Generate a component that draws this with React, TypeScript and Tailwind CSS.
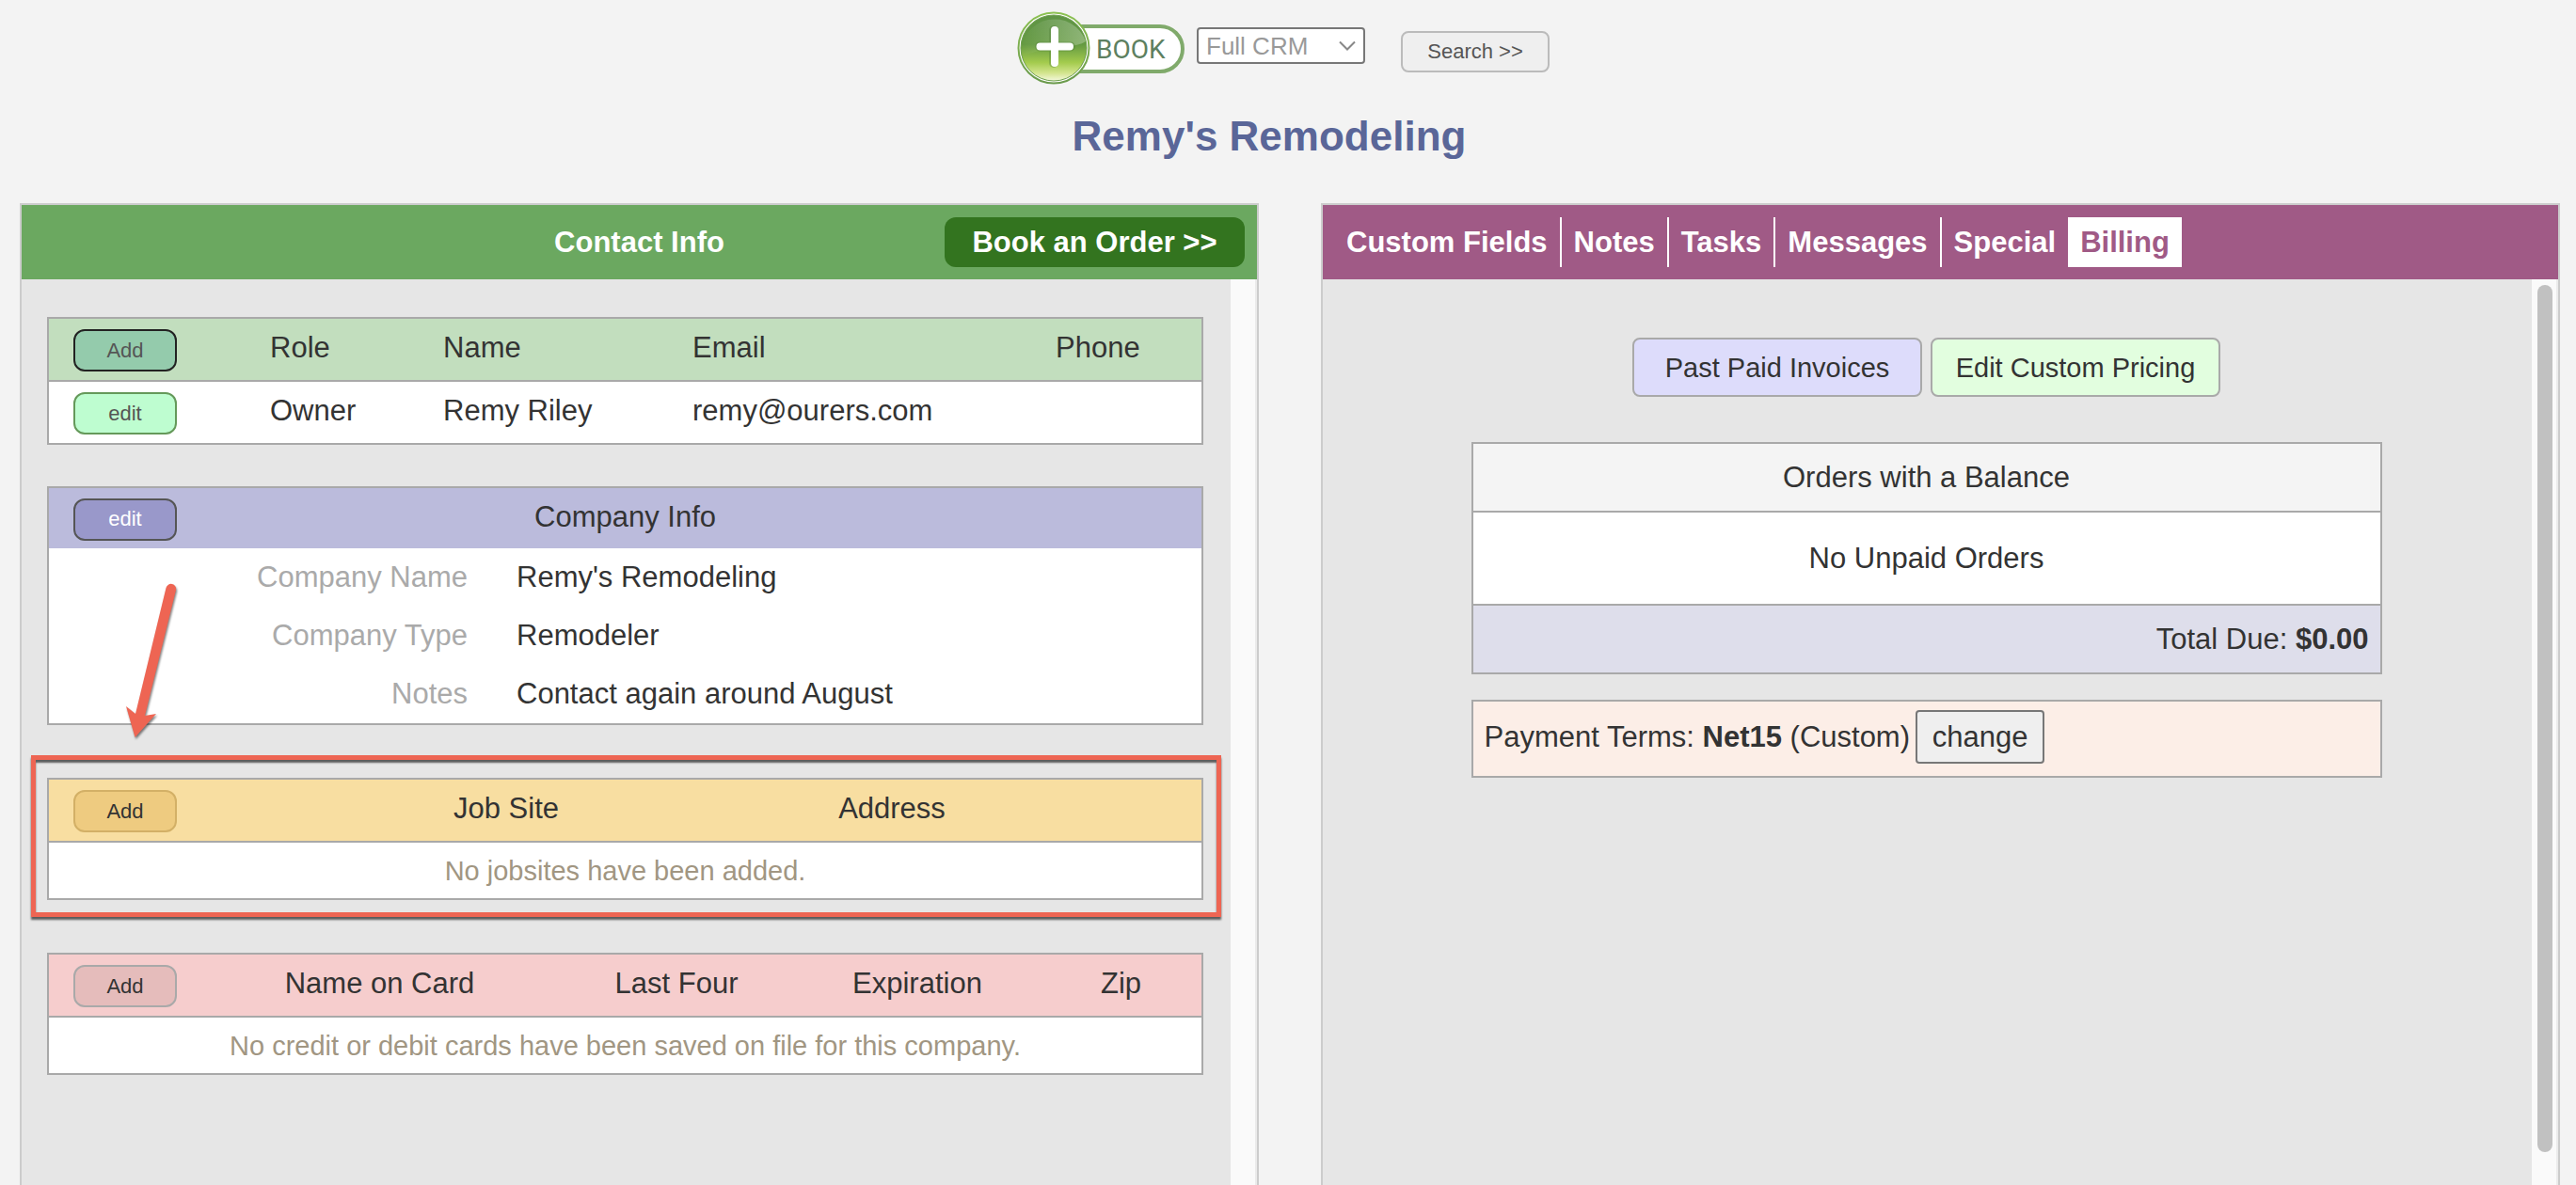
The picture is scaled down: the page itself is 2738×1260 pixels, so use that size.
import { useState } from "react";
import type { ReactNode } from "react";
import clsx from "clsx";

const TABS = ["Custom Fields", "Notes", "Tasks", "Messages", "Special", "Billing"];

const COMPANY_ROWS = [
  { label: "Company Name", value: "Remy's Remodeling" },
  { label: "Company Type", value: "Remodeler" },
  { label: "Notes", value: "Contact again around August" },
];

function BookLogo() {
  return (
    <svg width="178" height="78" viewBox="0 0 178 78" aria-hidden="true">
      <defs>
        <linearGradient id="orb" x1="0" y1="0" x2="0" y2="1">
          <stop offset="0" stopColor="#5f9446" />
          <stop offset="0.45" stopColor="#659a42" />
          <stop offset="0.72" stopColor="#a3cb4d" />
          <stop offset="0.88" stopColor="#d3e58e" />
          <stop offset="1" stopColor="#f4f8dc" />
        </linearGradient>
        <linearGradient id="gloss" x1="0" y1="0" x2="1" y2="0">
          <stop offset="0" stopColor="#ffffff" stopOpacity="0" />
          <stop offset="1" stopColor="#ffffff" stopOpacity="0.28" />
        </linearGradient>
        <linearGradient id="ring" x1="0" y1="0" x2="0" y2="1">
          <stop offset="0" stopColor="#8cc152" />
          <stop offset="1" stopColor="#6a9a4c" />
        </linearGradient>
      </defs>
      <path d="M60 16 H152 A24 24 0 0 1 152 64 H60 Z" fill="#fff" stroke="#80aa6b" strokeWidth="4" />
      <circle cx="39" cy="39" r="37.500" fill="#fff" stroke="url(#ring)" strokeWidth="2" />
      <circle cx="39" cy="39" r="35" fill="url(#orb)" stroke="#6d9f4d" strokeWidth="1" />
      <path d="M5 46 A35 35 0 0 1 73 32 C62 39 50 36 38 38 C25 40 15 46 5 46 Z" fill="url(#gloss)" />
      <path d="M39 20 V55 M24 37.500 H57" stroke="#4d7d35" strokeWidth="10" strokeLinecap="round" opacity="0.35" />
      <path d="M40 20 V55 M24.500 37.500 H56" stroke="#fff" strokeWidth="8" strokeLinecap="round" />
      <text x="84" y="50" fontFamily="Roboto, sans-serif" fontSize="28" fontWeight="400" fill="#5d8060">
        BOOK
      </text>
    </svg>
  );
}

function RowButton({ className, children }: { className: string; children: ReactNode }) {
  return (
    <button
      type="button"
      className={clsx("block h-[45px] w-[110px] rounded-xl border-2 text-[22px] leading-none", className)}
    >
      {children}
    </button>
  );
}

function Card({ children }: { children: ReactNode }) {
  return <div className="border-2 border-[#a9a9a9] bg-white">{children}</div>;
}

function Cols({ widths }: { widths: string[] }) {
  return (
    <colgroup>
      {widths.map((width, i) => (
        <col key={i} className={width} />
      ))}
    </colgroup>
  );
}

function ScrollTrack({ children }: { children?: ReactNode }) {
  return (
    <div className="w-7 shrink-0 border-r-2 border-[#ebebeb] bg-[#fafafa] pl-1.5 pt-1.5">{children}</div>
  );
}

const tableClass = "w-full table-fixed border-separate border-spacing-0";
const headCell = "h-[67px] border-b-2 border-[#a9a9a9] p-0 pb-1 font-normal";
const buttonHead = "h-[67px] border-b-2 border-[#a9a9a9] p-0 pl-[26px] pt-0.5";

function ContactsTable() {
  return (
    <Card>
      <table className={clsx(tableClass, "text-left")}>
        <Cols widths={["w-[235px]", "w-[184px]", "w-[265px]", "w-[386px]", "w-[155px]"]} />
        <thead className="bg-[#c2debe]">
          <tr>
            <th className={buttonHead}>
              <RowButton className="border-[#222] bg-[#94cbac] font-normal text-[#555]">Add</RowButton>
            </th>
            <th className={headCell}>Role</th>
            <th className={headCell}>Name</th>
            <th className={headCell}>Email</th>
            <th className={headCell}>Phone</th>
          </tr>
        </thead>
        <tbody>
          <tr>
            <td className="h-[65px] p-0 pl-[26px] pt-0.5">
              <RowButton className="border-[#65995a] bg-[#befdd0] text-[#555]">edit</RowButton>
            </td>
            <td className="p-0 pb-1">Owner</td>
            <td className="p-0 pb-1">Remy Riley</td>
            <td className="p-0 pb-1">remy@ourers.com</td>
            <td className="p-0 pb-1"></td>
          </tr>
        </tbody>
      </table>
    </Card>
  );
}

function CompanyCard() {
  return (
    <Card>
      <div className="grid h-16 grid-cols-[1fr_auto_1fr] items-center bg-[#bbbbdc] px-[26px] pt-0.5">
        <RowButton className="border-[#555] bg-[#9998ca] text-white">edit</RowButton>
        <h2 className="pb-1">Company Info</h2>
      </div>
      <table className={tableClass}>
        <Cols widths={["w-[445px]", "w-[780px]"]} />
        <tbody>
          {COMPANY_ROWS.map((row) => (
            <tr key={row.label}>
              <th scope="row" className="h-[62px] p-0 text-right font-normal text-[#aaa]">
                {row.label}
              </th>
              <td className="p-0 pl-[52px]">{row.value}</td>
            </tr>
          ))}
        </tbody>
      </table>
    </Card>
  );
}

function JobSitesTable() {
  return (
    <Card>
      <table className={clsx(tableClass, "text-center")}>
        <Cols widths={["w-[405px]", "w-[162px]", "w-[658px]"]} />
        <thead className="bg-[#f8dea1]">
          <tr>
            <th className={buttonHead}>
              <RowButton className="border-[#d3b066] bg-[#eecb80] font-normal">Add</RowButton>
            </th>
            <th className={headCell}>Job Site</th>
            <th className={headCell}>Address</th>
          </tr>
        </thead>
        <tbody>
          <tr>
            <td colSpan={3} className="h-[59px] p-0 text-[29px] text-[#a19682]">
              No jobsites have been added.
            </td>
          </tr>
        </tbody>
      </table>
    </Card>
  );
}

function CardsTable() {
  return (
    <Card>
      <table className={clsx(tableClass, "text-center")}>
        <Cols widths={["w-[161px]", "w-[381px]", "w-[250px]", "w-[262px]", "w-[171px]"]} />
        <thead className="bg-[#f6cdcd]">
          <tr>
            <th className={buttonHead}>
              <RowButton className="border-[#a9a9a9] bg-[#e5bcbb] font-normal">Add</RowButton>
            </th>
            <th className={headCell}>Name on Card</th>
            <th className={headCell}>Last Four</th>
            <th className={headCell}>Expiration</th>
            <th className={headCell}>Zip</th>
          </tr>
        </thead>
        <tbody>
          <tr>
            <td colSpan={5} className="h-[59px] p-0 text-[29px] text-[#a19682]">
              No credit or debit cards have been saved on file for this company.
            </td>
          </tr>
        </tbody>
      </table>
    </Card>
  );
}

// Red box and arrow that point the reader at the job site table
function Callout() {
  return (
    <>
      <div className="pointer-events-none absolute -bottom-[18px] -left-[17px] -right-[19px] -top-6 border-[5px] border-[#ee6553] shadow-[0_3px_2px_rgba(0,0,0,0.6),inset_0_3px_2px_rgba(0,0,0,0.6)]" />
      <svg
        className="pointer-events-none absolute -top-[210px] left-20 drop-shadow-[1px_2px_1px_rgba(0,0,0,0.5)]"
        width="60"
        height="172"
        viewBox="0 0 60 172"
        aria-hidden="true"
      >
        <path
          d="M46.500 8 A5.300 5.300 0 0 1 57 10.500 L24 144 L36 142 L13.500 167 L4 134 L14 142 Z"
          fill="#ee6553"
        />
      </svg>
    </>
  );
}

function ContactPanel() {
  return (
    <section className="flex flex-1 flex-col border-2 border-b-0 border-[#ccc]">
      <div className="grid h-[79px] grid-cols-[1fr_auto_1fr] items-center bg-[#6ba860] px-[13px] font-bold text-white">
        <h2 className="col-start-2">Contact Info</h2>
        <button type="button" className="h-[53px] w-[319px] justify-self-end rounded-xl bg-[#33741f]">
          Book an Order &gt;&gt;
        </button>
      </div>
      <div className="flex flex-1">
        <div className="flex-1 pb-10 pl-[27px] pr-[29px] pt-10">
          <ContactsTable />
          <div className="mt-11">
            <CompanyCard />
          </div>
          <div className="relative mt-14">
            <JobSitesTable />
            <Callout />
          </div>
          <div className="mt-14">
            <CardsTable />
          </div>
        </div>
        <ScrollTrack />
      </div>
    </section>
  );
}

function BillingPanel() {
  const [activeTab, setActiveTab] = useState("Billing");

  return (
    <section className="flex flex-1 flex-col border-2 border-b-0 border-[#ccc]">
      <nav className="flex h-[79px] items-center bg-[#a05a86] pl-3 font-bold">
        {TABS.map((tab, i) => (
          <button
            key={tab}
            type="button"
            onClick={() => setActiveTab(tab)}
            className={clsx(
              "h-[53px] px-[13px]",
              tab === activeTab ? "bg-white text-[#a05a86]" : "text-white",
              i < TABS.length - 1 && TABS[i + 1] !== activeTab && "border-r-2 border-white"
            )}
          >
            {tab}
          </button>
        ))}
      </nav>
      <div className="flex flex-1">
        <div className="flex-1 pr-0.5 pt-[62px]">
          <div className="flex justify-center gap-[9px] text-[29px]">
            <button type="button" className="h-[63px] w-[308px] rounded-lg border-2 border-[#a9a9a9] bg-[#dddcfb]">
              Past Paid Invoices
            </button>
            <button type="button" className="h-[63px] w-[308px] rounded-lg border-2 border-[#a9a9a9] bg-[#e2fedf]">
              Edit Custom Pricing
            </button>
          </div>
          <div className="mx-auto mt-12 w-full max-w-[968px]">
            <Card>
              <table className={clsx(tableClass, "text-center")}>
                <thead className="bg-[#f4f4f4]">
                  <tr>
                    <th className="h-[73px] border-b-2 border-[#a9a9a9] p-0 font-normal">Orders with a Balance</th>
                  </tr>
                </thead>
                <tbody>
                  <tr>
                    <td className="h-[99px] border-b-2 border-[#a9a9a9] p-0">No Unpaid Orders</td>
                  </tr>
                </tbody>
                <tfoot className="bg-[#dedeeb]">
                  <tr>
                    <td className="h-[71px] p-0 pr-3 text-right">
                      Total Due: <b>$0.00</b>
                    </td>
                  </tr>
                </tfoot>
              </table>
            </Card>
            <div className="mt-[27px] flex h-[83px] items-baseline gap-1.5 border-2 border-[#a9a9a9] bg-[#fceee7] px-3 pt-[9px]">
              <p>
                Payment Terms: <b>Net15</b> (Custom)
              </p>
              <button type="button" className="h-[57px] w-[137px] rounded border-2 border-[#777] bg-[#efefef]">
                change
              </button>
            </div>
          </div>
        </div>
        <ScrollTrack>
          <div className="h-[922px] w-4 rounded-full bg-[#c1c1c1]" />
        </ScrollTrack>
      </div>
    </section>
  );
}

export default function App() {
  return (
    <div className="flex min-h-screen flex-col bg-[#f3f3f3] font-['Liberation_Sans',Arial,sans-serif] text-[31px] leading-9 text-[#333]">
      <header className="pt-3">
        <form className="flex items-start justify-center pr-2.5" onSubmit={(e) => e.preventDefault()}>
          <button type="button" aria-label="Book">
            <BookLogo />
          </button>
          <div className="relative ml-[13px] mt-[17px]">
            <select
              aria-label="Search scope"
              className="block h-[39px] w-[179px] appearance-none rounded border-2 border-[#777] bg-white pl-2 text-[26px] leading-none text-[#999]"
            >
              <option>Full CRM</option>
            </select>
            <svg
              className="pointer-events-none absolute right-2.5 top-3.5"
              width="18"
              height="12"
              viewBox="0 0 18 12"
              fill="none"
              stroke="#888"
              strokeWidth="2"
              aria-hidden="true"
            >
              <path d="M1 1.500 L9 9.500 L17 1.500" />
            </svg>
          </div>
          <button
            type="submit"
            className="ml-[38px] mt-[21px] h-11 w-[158px] rounded-lg border-2 border-[#bbb] bg-[#efefef] text-[22px] leading-none text-[#555]"
          >
            Search &gt;&gt;
          </button>
        </form>
        <h1 className="mt-[25px] pr-10 text-center text-[44px] font-bold leading-[60px] text-[#5a6698]">
          Remy's Remodeling
        </h1>
      </header>
      <main className="mt-[41px] flex flex-1 gap-[66px] pl-[21px] pr-[17px] *:bg-[#e6e6e6]">
        <ContactPanel />
        <BillingPanel />
      </main>
    </div>
  );
}
